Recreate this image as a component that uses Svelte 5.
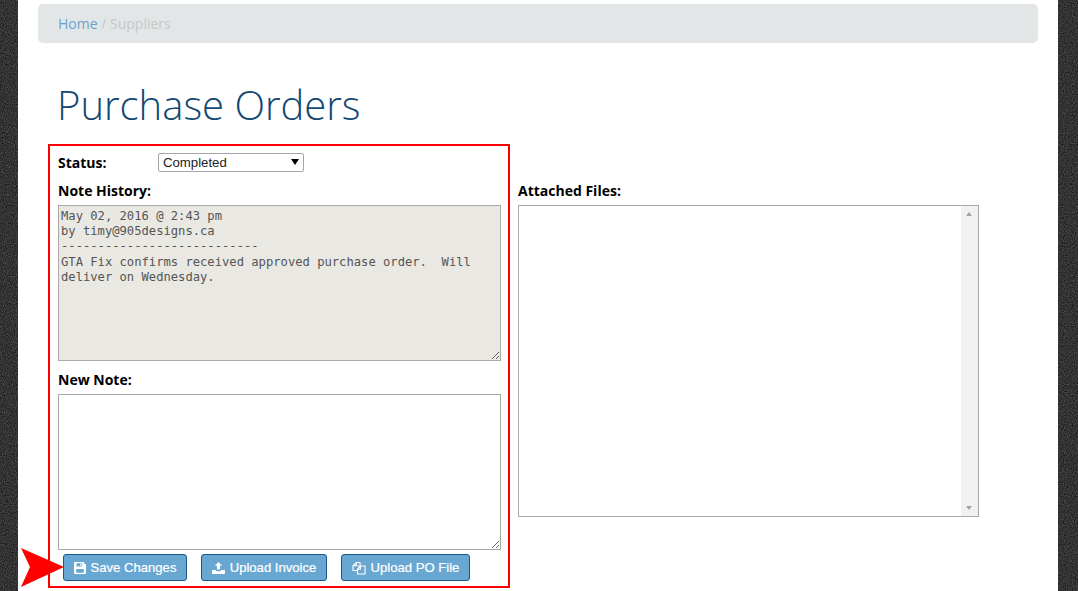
<script>
  const note = `May 02, 2016 @ 2:43 pm
by timy@905designs.ca
---------------------------
GTA Fix confirms received approved purchase order.  Will
deliver on Wednesday.`;
</script>

<div class="page">
  <svg class="grain" width="1078" height="591" aria-hidden="true">
    <filter id="noise" x="0" y="0" width="100%" height="100%" color-interpolation-filters="sRGB">
      <feTurbulence type="fractalNoise" baseFrequency="0.9" numOctaves="2" seed="4"/>
      <feColorMatrix type="matrix" values="0.25 0.25 0 0 -0.05  0.25 0.25 0 0 -0.05  0.25 0.25 0 0 -0.05  0 0 0 0 1"/>
    </filter>
    <rect width="1078" height="591" filter="url(#noise)"/>
  </svg>
  <main class="sheet">
    <nav class="crumbs"><a href="#home">Home</a> <span class="sep">/</span> <span class="cur">Suppliers</span></nav>
    <h1>Purchase Orders</h1>
    <div class="columns">
      <form class="box">
        <div class="status">
          <label class="lab" for="st">Status:</label>
          <div class="selectwrap">
            <select id="st"><option>Completed</option></select>
          </div>
        </div>
        <div class="lab hist">Note History:</div>
        <textarea class="note ro" readonly value={note}></textarea>
        <div class="lab newn">New Note:</div>
        <textarea class="note"></textarea>
        <div class="btns">
          <button type="button" class="b1">
            <svg viewBox="0 0 12 12" width="12" height="12"><path fill="currentColor" fill-rule="evenodd" d="M1 0h8.300L12 2.700V11a1 1 0 0 1-1 1H1a1 1 0 0 1-1-1V1a1 1 0 0 1 1-1zM2.500 1.200V4.500h5.800V1.200zM6.300 1.700h1.300v2.200H6.300zM2.200 7v3.800h7.600V7z"/></svg>
            Save Changes
          </button>
          <button type="button" class="b2">
            <svg viewBox="0 0 13 12" width="13" height="12"><path fill="currentColor" d="M6.500 0l3.700 3.800H8v3.700H5V3.800H2.800zM0 8h4v.5c0 .5.400.8.800.8h3.400c.4 0 .8-.3.800-.8V8h4v3.300c0 .4-.3.700-.7.700H.7c-.4 0-.7-.3-.7-.7z"/></svg>
            Upload Invoice
          </button>
          <button type="button" class="b3">
            <svg viewBox="0 0 14 14" width="14" height="14"><path fill="none" stroke="currentColor" stroke-width="1.100" d="M5 9.500H1V4.800L4.300 1.500H8V4M4.300 1.500V4.800H1M5.500 5H13V13H5.500V8.300L8.500 5V8.300H5.500"/></svg>
            Upload PO File
          </button>
        </div>
      </form>
      <section class="files">
        <div class="lab fl">Attached Files:</div>
        <div class="filebox">
          <div class="scroll">
            <span class="up"></span>
            <span class="down"></span>
          </div>
        </div>
      </section>
    </div>
  </main>
  <svg class="arrow" viewBox="0 0 44 40" width="44" height="40"><polygon points="0,0 43,19 0,39 9,19" fill="#fe0000"/></svg>
</div>

<style>
  :global(body) {
    margin: 0;
    background-color: #333;
  }
  .page {
    position: relative;
    height: 591px;
    overflow: hidden;
    padding: 0 20px 0 18px;
    box-sizing: border-box;
    background-color: #333;
  }
  .grain {
    position: absolute;
    left: 0;
    top: 0;
  }
  .sheet {
    position: relative;
    background: #fff;
    height: 591px;
    padding: 4px 20px 0;
    box-sizing: border-box;
    font-family: "Open Sans", sans-serif;
  }
  .crumbs {
    height: 39px;
    line-height: 39px;
    background: #e3e6e7;
    border-radius: 5px;
    padding-left: 20px;
    font-size: 14px;
    color: #c3c8ca;
  }
  .crumbs a { color: #6ca2cd; text-decoration: none; }
  .sep { color: #c3c8ca; }
  h1 {
    margin: 32px 0 0 19px;
    font-weight: 300;
    font-size: 40px;
    line-height: 60px;
    color: #134872;
    height: 69px;
  }
  .columns {
    display: flex;
    margin-left: 10px;
    align-items: flex-start;
  }
  .box {
    width: 462px;
    height: 444px;
    box-sizing: border-box;
    border: 2px solid #f00;
    padding: 7px 8px 0;
  }
  .lab {
    font-weight: 700;
    font-size: 14px;
    line-height: 19px;
    color: #000;
  }
  .status {
    display: flex;
    align-items: center;
    height: 19px;
  }
  .status label { width: 100px; }
  .selectwrap {
    position: relative;
    width: 146px;
    height: 19px;
  }
  .selectwrap::after {
    content: "";
    position: absolute;
    right: 5px;
    top: 6px;
    border-left: 4px solid transparent;
    border-right: 4px solid transparent;
    border-top: 6px solid #000;
  }
  select {
    appearance: none;
    display: block;
    width: 100%;
    height: 19px;
    box-sizing: border-box;
    border: 1px solid #a6a6a6;
    border-radius: 2px;
    background: #fff;
    color: #222;
    font-family: "Liberation Sans", Arial, sans-serif;
    font-size: 13.200px;
    padding: 0 0 0 4px;
    margin: 0;
  }
  .hist { margin-top: 9px; }
  .note {
    display: block;
    width: 443px;
    height: 156px;
    box-sizing: border-box;
    margin: 5px 0 0;
    padding: 3px 2px 2px;
    border: 1px solid #a9a9a9;
    background: #fff;
    font-family: "DejaVu Sans Mono", monospace;
    font-size: 12.170px;
    line-height: 15.200px;
    color: #555;
    outline: none;
  }
  .ro { background: #e9e8e2; }
  .newn { margin-top: 9px; }
  .btns {
    display: flex;
    gap: 14px;
    margin: 4px 0 0 5px;
  }
  button {
    display: flex;
    align-items: center;
    justify-content: center;
    gap: 5px;
    height: 27px;
    box-sizing: border-box;
    padding: 0;
    background: #69a7d3;
    border: 1px solid #1c5a85;
    border-radius: 3px;
    color: #fff;
    font-family: "Liberation Sans", Arial, sans-serif;
    font-size: 13.100px;
    -webkit-text-stroke: 0.2px #fff;
  }
  .b1 { width: 124px; }
  .b2 { width: 126px; }
  .b3 { width: 129px; }
  .files {
    margin: 0 0 0 8px;
  }
  .fl { padding-top: 37px; }
  .filebox {
    width: 461px;
    height: 312px;
    box-sizing: border-box;
    margin-top: 5px;
    border: 1px solid #a9a9a9;
    display: flex;
    justify-content: flex-end;
  }
  .scroll {
    position: relative;
    width: 17px;
    background: #f1f1f1;
  }
  .up, .down {
    position: absolute;
    left: 5px;
    border-left: 3.500px solid transparent;
    border-right: 3.500px solid transparent;
  }
  .up { top: 6px; border-bottom: 4px solid #a3a3a3; }
  .down { bottom: 6px; border-top: 4px solid #a3a3a3; }
  .arrow {
    position: absolute;
    left: 21px;
    top: 548px;
  }
</style>
